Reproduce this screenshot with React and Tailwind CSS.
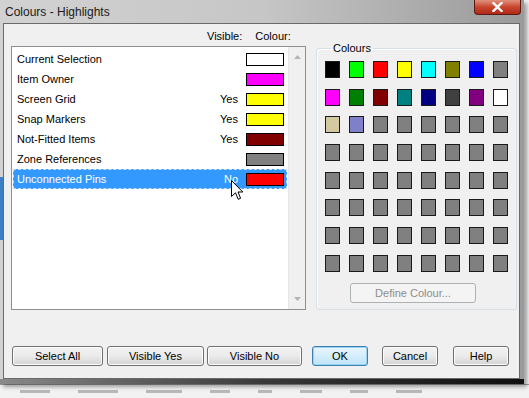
import React from 'react';

const rows = [
  { name: 'Current Selection', visible: '', colour: '#ffffff' },
  { name: 'Item Owner', visible: '', colour: '#ff00ff' },
  { name: 'Screen Grid', visible: 'Yes', colour: '#ffff00' },
  { name: 'Snap Markers', visible: 'Yes', colour: '#ffff00' },
  { name: 'Not-Fitted Items', visible: 'Yes', colour: '#800000' },
  { name: 'Zone References', visible: '', colour: '#808080' },
  { name: 'Unconnected Pins', visible: 'No', colour: '#ff0000', selected: true },
];

const palette = [
  '#000000', '#00ff00', '#ff0000', '#ffff00', '#00ffff', '#808000', '#0000ff', '#808080',
  '#ff00ff', '#008000', '#800000', '#008080', '#000080', '#404040', '#800080', '#ffffff',
  '#d4c8a0', '#8080c8',
];
while (palette.length < 64) palette.push('#808080');

const WinButton = ({ children, width, className = '', primary = false }) => (
  <button
    className={
      'h-[20px] rounded-[3px] border text-[11px] leading-none text-black ' +
      (primary
        ? 'border-[#3c7fb1] bg-gradient-to-b from-[#eaf6fd] to-[#bde4f9] shadow-[inset_0_0_0_1px_#9ad3f2] '
        : 'border-[#707070] bg-gradient-to-b from-[#f2f2f2] via-[#ebebeb] to-[#d3d3d3] shadow-[inset_0_0_0_1px_#fcfcfc] ') +
      width + ' ' + className
    }
  >
    {children}
  </button>
);

export default function App() {
  return (
    <div className="relative w-[529px] h-[398px] overflow-hidden bg-[#f2f2f2] font-['Liberation_Sans',Arial,sans-serif] text-black">
      <div className="relative flex flex-col w-[524px] h-[384px] bg-gradient-to-r from-[#d2d2d2] via-[#c6c6c6] to-[#9a9a9a] shadow-[3px_3px_4px_rgba(0,0,0,0.35)]">
        {/* desktop blue peeking behind the frame */}
        <div className="absolute left-0 top-[177px] w-[3px] h-[63px] bg-[#3d7fc4]" />

        {/* title bar */}
        <div className="relative h-[23px] flex items-center pl-[5px] text-[12px] text-[#1a1a1a]">
          Colours - Highlights
          <div className="absolute right-[3px] top-0 w-[47px] h-[15px] rounded-b-[4px] border border-t-0 border-[#5a1a12] bg-gradient-to-b from-[#e0907e] via-[#c8442c] to-[#b02a18] flex items-center justify-center">
            <svg width="11" height="10" viewBox="0 0 11 10">
              <path d="M1.5 1 L9.5 9 M9.5 1 L1.5 9" stroke="#ffffff" strokeWidth="2.4" strokeLinecap="square" />
            </svg>
          </div>
        </div>

        {/* client area */}
        <div className="ml-[3px] w-[517px] h-[356px] border border-[#6a6a6a] bg-[#f0f0f0] flex flex-col">
          <div className="h-[22px] flex items-end pb-[3px] pl-[203px] text-[11px] leading-[13px]">
            <span>Visible:</span>
            <span className="ml-[13px]">Colour:</span>
          </div>

          <div className="flex items-start">
            {/* list box */}
            <div className="ml-[7px] w-[295px] h-[264px] border border-[#8e8f8f] bg-white flex">
              <div className="flex-1 pt-[2px] px-[1px]">
                {rows.map(r => (
                  <div
                    key={r.name}
                    className={
                      'h-[20px] flex items-center text-[11px] ' +
                      (r.selected ? 'bg-[#3399ff] text-white outline outline-1 outline-dashed outline-[#c4defa] -outline-offset-1' : '')
                    }
                  >
                    <span className="flex-1 pl-[4px]">{r.name}</span>
                    <span className="mr-[8px]">{r.visible}</span>
                    <span className="w-[38px] h-[13px] border border-black mr-[3px]" style={{ backgroundColor: r.colour }} />
                  </div>
                ))}
              </div>
              <div className="w-[17px] bg-[#f0f0f0] border-l border-[#e6e6e6] flex flex-col items-center justify-between py-[8px]">
                <svg width="7" height="4" viewBox="0 0 7 4"><path d="M0 4 L3.5 0 L7 4 Z" fill="#b4b4b4" /></svg>
                <svg width="7" height="4" viewBox="0 0 7 4"><path d="M0 0 L3.5 4 L7 0 Z" fill="#b4b4b4" /></svg>
              </div>
            </div>

            {/* colours group */}
            <fieldset className="ml-[10px] mt-[-4px] w-[200px] h-[268px] border border-[#d5dfe5] rounded-[3px] px-[8px] shadow-[inset_1px_1px_0_#ffffff]">
              <legend className="ml-[6px] px-[2px] text-[11px] leading-[13px]">Colours</legend>
              <div className="mt-[6px] grid grid-cols-[repeat(8,15px)] gap-x-[9px] gap-y-[10.7px]">
                {palette.map((c, i) => (
                  <span key={i} className="w-[15px] h-[17px] border border-[#1a1a1a]" style={{ backgroundColor: c }} />
                ))}
              </div>
              <button className="mt-[11px] ml-[25px] w-[126px] h-[20px] rounded-[3px] border border-[#adb2b5] bg-[#f4f4f4] text-[11px] text-[#8d8d8d]">
                Define Colour...
              </button>
            </fieldset>
          </div>

          <div className="mt-[36px] flex items-center pl-[8px]">
            <WinButton width="w-[91px]">Select All</WinButton>
            <WinButton width="w-[97px]" className="ml-[4px]">Visible Yes</WinButton>
            <WinButton width="w-[95px]" className="ml-[3px]">Visible No</WinButton>
            <WinButton width="w-[56px]" className="ml-[10px]" primary>OK</WinButton>
            <WinButton width="w-[56px]" className="ml-[14px]">Cancel</WinButton>
            <WinButton width="w-[56px]" className="ml-[15px]">Help</WinButton>
          </div>
        </div>
        <div className="flex-1 bg-gradient-to-r from-[#8a8a8a] via-[#3a3a3a] to-[#101010]" />
      </div>

      {/* application behind, blurred */}
      <div className="flex items-center gap-[28px] h-[14px] pl-[20px] border-t border-[#9a9a9a]">
        {[30, 40, 36, 20, 14, 22, 18, 26].map((w, i) => (
          <span key={i} className="h-[3px] bg-[#b8b8b8]" style={{ width: w }} />
        ))}
      </div>

      {/* mouse pointer */}
      <svg className="absolute left-[231px] top-[180px]" width="13" height="21" viewBox="0 0 13 21">
        <path d="M0.5 0.5 L0.5 16.5 L4.5 12.8 L7.2 19.3 L9.6 18.3 L7 12 L11.8 12 Z" fill="#ffffff" stroke="#000000" strokeWidth="1" strokeLinejoin="miter" />
      </svg>
    </div>
  );
}
